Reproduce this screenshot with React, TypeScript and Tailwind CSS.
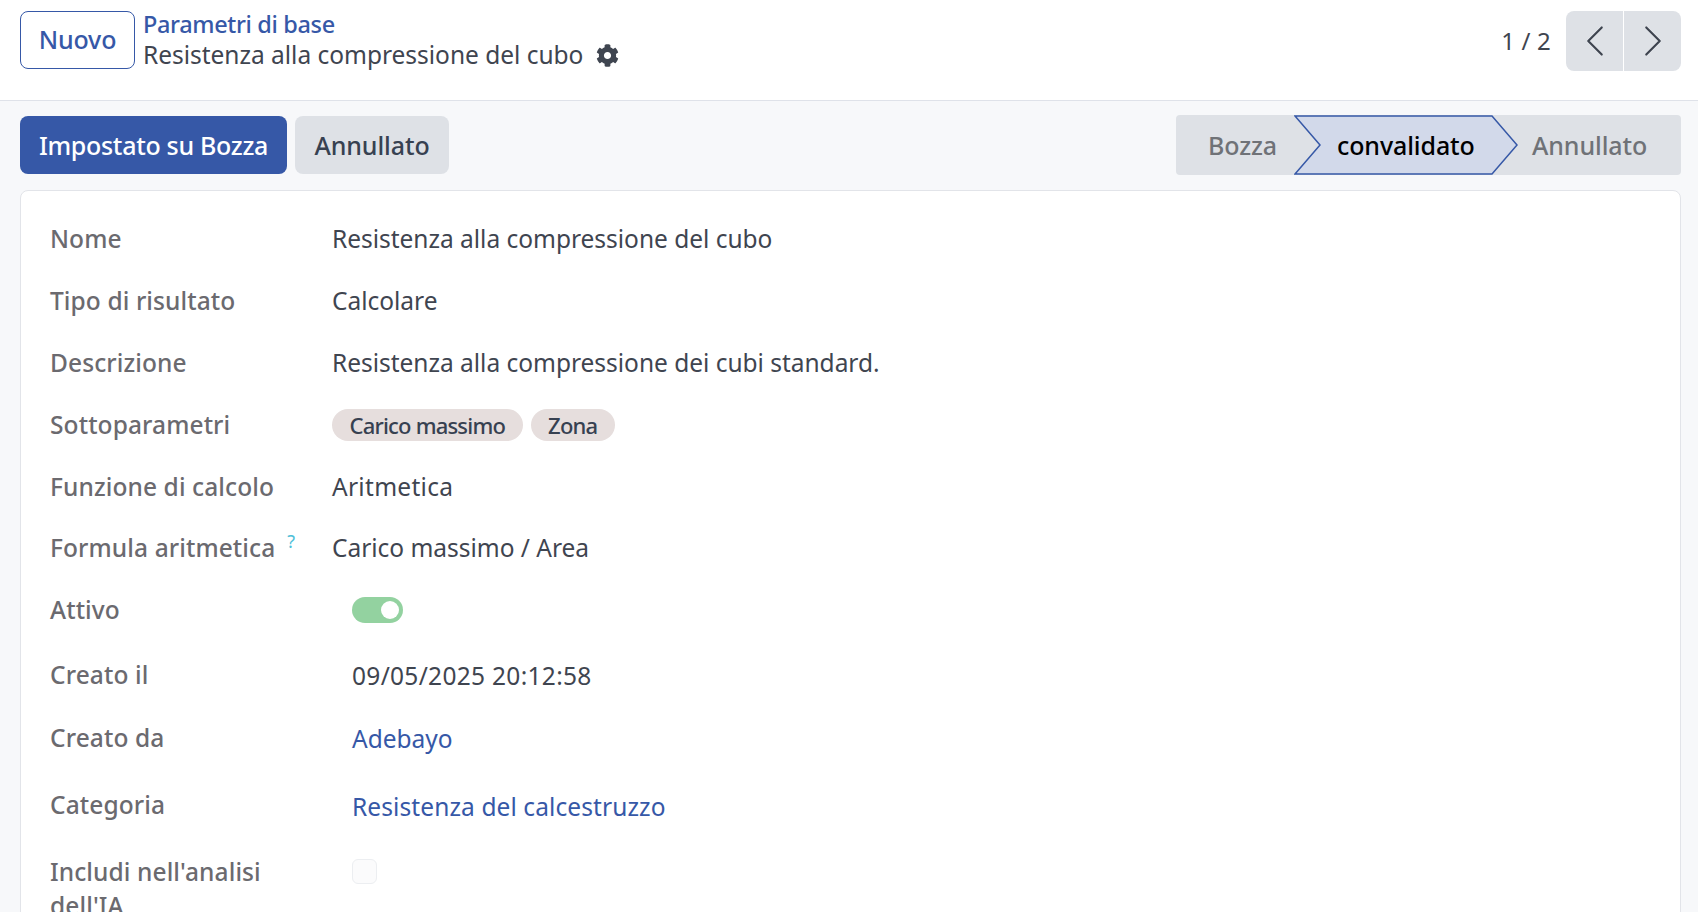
import { ChevronLeft, ChevronRight } from 'lucide-react'
import { FaCog } from 'react-icons/fa'

const LABEL = 'w-[282px] shrink-0 font-medium text-[#6b6a6f] text-[24.5px] leading-[29px] tracking-[0.1px]'
const VALUE = 'text-[24.5px] leading-[29px] tracking-[-0.02px]'

function Row({ label, height, children, help }: { label: string; height: number; children?: React.ReactNode; help?: boolean }) {
  return (
    <div className="flex items-start" style={{ height }}>
      <div className={LABEL}>
        {label}
        {help && <sup className="ml-3 text-[18px] font-normal text-[#4fc0d8]">?</sup>}
      </div>
      {children}
    </div>
  )
}

function Badge({ children }: { children: React.ReactNode }) {
  return (
    <span className="h-[32px] rounded-full bg-[#e6dedd] px-[17.5px] text-[22px] leading-[32px] font-medium tracking-[-0.8px] text-[#374151]">
      {children}
    </span>
  )
}

export default function App() {
  return (
    <div className="h-[912px] overflow-hidden bg-[#f7f8fa] text-[#3f4550] [font-family:'Noto_Sans',sans-serif]">
      {/* control panel */}
      <div className="flex h-[101px] items-start justify-between border-b border-[#dfe2e9] bg-white pl-5 pr-[17px] pt-[11px]">
        <div className="flex items-start gap-2">
          <button className="h-[58px] w-[115px] rounded-lg border border-[#3658a7] text-[25px] font-medium tracking-[-0.15px] text-[#3658a7]">
            Nuovo
          </button>
          <div className="-mt-[1px]">
            <div className="text-[23.5px] leading-[28px] font-medium tracking-[-0.35px] text-[#3658a7]">Parametri di base</div>
            <div className="mt-[2px] flex items-center gap-[13px] text-[24.5px] leading-[30px] tracking-[-0.02px]">
              Resistenza alla compressione del cubo
              <FaCog className="h-[23px] w-[23px] text-[#3f4550]" />
            </div>
          </div>
        </div>
        <div className="flex items-center gap-[15px]">
          <span className="-mt-[1px] text-[24px] tracking-[0.2px]">1 / 2</span>
          <div className="flex h-[60px] overflow-hidden rounded-lg">
            <div className="flex w-[58px] items-center justify-center border-r border-white bg-[#dee1e6]">
              <ChevronLeft className="h-[54px] w-[54px] shrink-0" strokeWidth={0.95} />
            </div>
            <div className="flex w-[57px] items-center justify-center bg-[#dee1e6]">
              <ChevronRight className="h-[54px] w-[54px] shrink-0" strokeWidth={0.95} />
            </div>
          </div>
        </div>
      </div>

      {/* action bar */}
      <div className="flex h-[89px] items-start justify-between pl-5 pr-[17px] pt-[14px]">
        <div className="flex gap-2 pt-[1px]">
          <button className="h-[58px] w-[267px] rounded-lg bg-[#3658a7] pt-[1px] text-[25px] font-medium tracking-[-0.3px] text-white">
            Impostato su Bozza
          </button>
          <button className="h-[58px] w-[154px] rounded-lg bg-[#dee1e6] pt-[1px] text-[25px] font-medium tracking-[-0.1px] text-[#374151]">
            Annullato
          </button>
        </div>
        <div className="relative flex h-[60px] w-[505px] items-center rounded bg-[#dee1e6] pt-[1px] text-[25px] font-medium tracking-[-0.1px] text-[#6f7277]">
          <svg className="absolute left-[118px] top-0" width="224" height="60" viewBox="0 0 224 60">
            <path d="M1 1 H198 L223 30 L198 59 H1 L26 30 Z" fill="#d2d9ea" stroke="#3658a7" strokeWidth="1.5" />
          </svg>
          <span className="relative ml-[32px] w-[118px]">Bozza</span>
          <span className="relative ml-[11px] w-[196px] text-black">convalidato</span>
          <span className="relative ml-[-1px]">Annullato</span>
        </div>
      </div>

      {/* sheet */}
      <div className="mx-5 mr-[17px] h-[800px] rounded-lg border border-[#e2e4e9] bg-white pl-[29px] pt-[33px]">
        <Row label="Nome" height={62}><span className={VALUE}>Resistenza alla compressione del cubo</span></Row>
        <Row label="Tipo di risultato" height={62}><span className={VALUE}>Calcolare</span></Row>
        <Row label="Descrizione" height={62}><span className={VALUE}>Resistenza alla compressione dei cubi standard.</span></Row>
        <Row label="Sottoparametri" height={62}>
          <div className="-mt-[1px] flex gap-2"><Badge>Carico massimo</Badge><Badge>Zona</Badge></div>
        </Row>
        <Row label="Funzione di calcolo" height={61}><span className={`${VALUE} tracking-[0.3px]`}>Aritmetica</span></Row>
        <Row label="Formula aritmetica" height={62} help><span className={`${VALUE} tracking-[-0.1px]`}>Carico massimo / Area</span></Row>
        <Row label="Attivo" height={65}>
          <div className="ml-5 mt-[2px] flex h-[26px] w-[51px] items-center justify-end rounded-full bg-[#93d2a0] pr-[4px]">
            <span className="h-[18px] w-[18px] rounded-full bg-white" />
          </div>
        </Row>
        <Row label="Creato il" height={63}><span className={`${VALUE} ml-5 mt-[1px] tracking-[0.3px]`}>09/05/2025 20:12:58</span></Row>
        <Row label="Creato da" height={67}><span className={`${VALUE} ml-5 mt-[1px] text-[#3658a7]`}>Adebayo</span></Row>
        <Row label="Categoria" height={65}><span className={`${VALUE} ml-5 mt-[2px] tracking-[0.1px] text-[#3658a7]`}>Resistenza del calcestruzzo</span></Row>
        <div className="flex items-start">
          <div className={`${LABEL} !leading-[34px]`}>Includi nell'analisi<br />dell'IA</div>
          <div className="ml-5 mt-[4px] h-[25px] w-[25px] rounded-md border border-[#eceef1] bg-[#fbfbfc]" />
        </div>
      </div>
    </div>
  )
}
